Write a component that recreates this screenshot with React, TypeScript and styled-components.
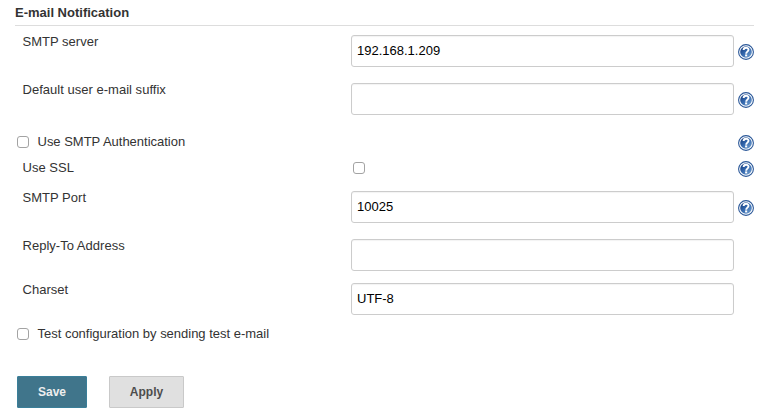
import React, { useId } from "react";
import styled, { createGlobalStyle } from "styled-components";

const GlobalStyle = createGlobalStyle`
  * { box-sizing: border-box; }
  body {
    margin: 0;
    background: #fff;
    color: #333;
    font: 13px/16px "Liberation Sans", Helvetica, Arial, sans-serif;
  }
`;

const Form = styled.form`
  width: 739px;
  margin-left: 15px;
  padding-top: 5px;
`;

const Heading = styled.h2`
  height: 21px;
  margin: 0 0 9px;
  border-bottom: 1px solid #ddd;
  font-size: 13px;
  line-height: 16px;
  font-weight: bold;
`;

const Row = styled.div<{ $height: number }>`
  display: grid;
  grid-template-columns: 336px 383px 16px;
  justify-content: start;
  align-items: start;
  height: ${(p) => p.$height}px;
`;

const Label = styled.label<{ $top?: number }>`
  margin-top: ${(p) => p.$top ?? -1}px;
  padding-left: 7.5px;
  letter-spacing: 0.02px;
  white-space: nowrap;
`;

const TextInput = styled.input`
  width: 383px;
  height: 32px;
  padding: 0 5px 1px;
  border: 1px solid #ccc;
  border-radius: 3px;
  background: #fff;
  box-shadow: inset 0 1px 1px rgba(0, 0, 0, 0.05);
  color: #000;
  font: inherit;
  outline: none;
`;

const CheckLabel = styled.label`
  grid-column: 1 / 3;
  display: flex;
  align-items: center;
  gap: 8.5px;
  height: 16px;
  padding-left: 2px;
  margin-top: 3px;
  letter-spacing: -0.01px;
`;

const Checkbox = styled.input.attrs({ type: "checkbox" })`
  appearance: none;
  width: 12px;
  height: 12px;
  margin: 0;
  border: 1px solid #a3a3a3;
  border-radius: 3px;
  background: #fff;

  &:checked {
    background: #3f788f;
  }
`;

const CellCheckbox = styled(Checkbox)`
  margin: 7px 0 0 2px;
`;

const HelpButton = styled.a<{ $top: number }>`
  display: block;
  width: 16px;
  height: 16px;
  margin: ${(p) => p.$top}px 0 0 4px;
`;

const Actions = styled.div`
  display: flex;
  gap: 22px;
  padding-left: 2px;
`;

const Button = styled.button<{ $primary?: boolean }>`
  width: ${(p) => (p.$primary ? 70 : 75)}px;
  height: 32px;
  padding: 0;
  border: 1px solid ${(p) => (p.$primary ? "#3a7f99" : "#c9c9c9")};
  border-radius: 1px;
  background: ${(p) => (p.$primary ? "#40758b" : "#e0e0e0")};
  color: ${(p) => (p.$primary ? "#eee" : "#4d4d4d")};
  font: bold 12px/30px "Liberation Sans", Helvetica, Arial, sans-serif;
`;

function Help({ top = 9 }: { top?: number }) {
  const id = useId();
  return (
    <HelpButton $top={top} aria-label="Help">
      <svg width="16" height="16" viewBox="0 0 16 16" display="block">
        <defs>
          <linearGradient id={id} x1="0" y1="0" x2="1" y2="1">
            <stop offset="0.1" stopColor="#173f82" />
            <stop offset="0.5" stopColor="#376bb0" />
            <stop offset="0.95" stopColor="#729fcf" />
          </linearGradient>
        </defs>
        <circle cx="8" cy="8" r="7.4" fill="#fff" stroke="#2a5798" strokeWidth="1.1" />
        <circle cx="8" cy="8" r="5.8" fill={`url(#${id})`} />
        <path
          d="M5.6 6.1C5.6 2.9 10.5 3 10.5 5.8C10.5 7.7 8.2 7.6 8.2 9.7"
          fill="none"
          stroke="#fff"
          strokeWidth="1.9"
        />
        <rect x="7.1" y="10.4" width="2.1" height="2" fill="#fff" />
      </svg>
    </HelpButton>
  );
}

interface FieldProps {
  id: string;
  label: string;
  value?: string;
  height: number;
  help?: boolean;
}

function Field({ id, label, value = "", height, help }: FieldProps) {
  return (
    <Row $height={height}>
      <Label htmlFor={id}>{label}</Label>
      <TextInput id={id} defaultValue={value} />
      {help && <Help />}
    </Row>
  );
}

export default function App() {
  return (
    <>
      <GlobalStyle />
      <Form>
        <Heading>E-mail Notification</Heading>
        <Field id="smtp" label="SMTP server" value="192.168.1.209" height={48} help />
        <Field id="suffix" label="Default user e-mail suffix" height={48} help />
        <Row $height={24}>
          <CheckLabel>
            <Checkbox />
            Use SMTP Authentication
          </CheckLabel>
          <Help top={4} />
        </Row>
        <Row $height={36}>
          <Label htmlFor="ssl" $top={5}>Use SSL</Label>
          <CellCheckbox id="ssl" />
          <Help top={6} />
        </Row>
        <Field id="port" label="SMTP Port" value="10025" height={48} help />
        <Field id="reply" label="Reply-To Address" height={44} />
        <Field id="charset" label="Charset" value="UTF-8" height={40} />
        <Row $height={53}>
          <CheckLabel>
            <Checkbox />
            Test configuration by sending test e-mail
          </CheckLabel>
        </Row>
        <Actions>
          <Button type="button" $primary>Save</Button>
          <Button type="button">Apply</Button>
        </Actions>
      </Form>
    </>
  );
}
